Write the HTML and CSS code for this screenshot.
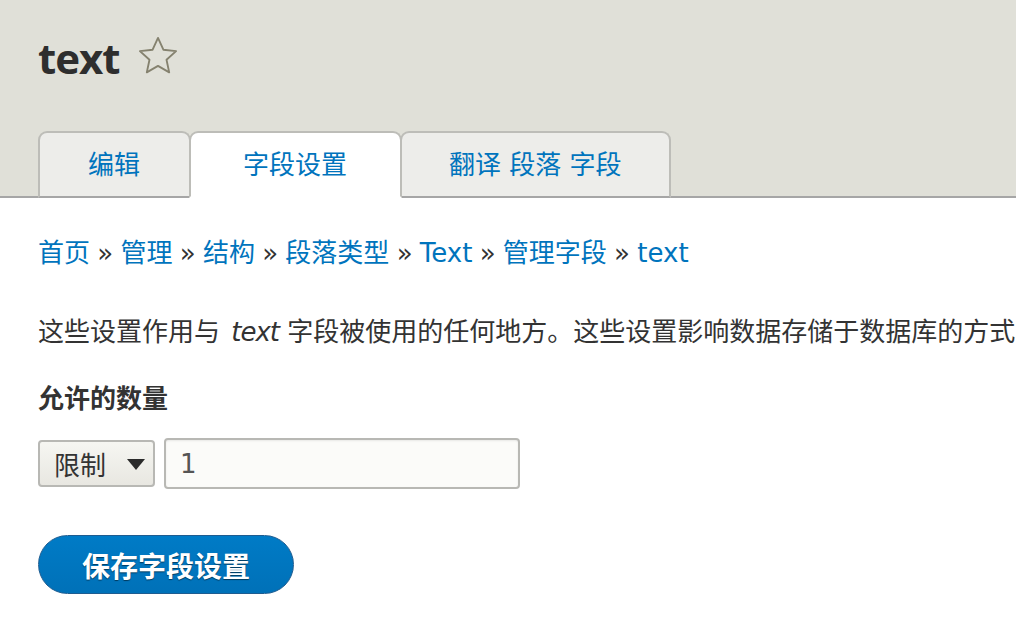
FILE: index.html
```html
<!DOCTYPE html>
<html lang="zh">
<head>
<meta charset="utf-8">
<title>text</title>
<link rel="stylesheet" href="styles.css">
</head>
<body>
<header class="header">
  <h1 class="page-title">text <span class="star"><svg viewBox="0 0 36 36" width="42" height="42"><polygon points="18,2.5 22.6,12.6 33.5,13.8 25.3,21.2 27.6,32 18,26.5 8.4,32 10.7,21.2 2.5,13.8 13.4,12.6" fill="none" stroke="#85826f" stroke-width="1.6" stroke-linejoin="round"/></svg></span></h1>
  <ul class="tabs">
    <li class="tab"><a href="#">编辑</a></li>
    <li class="tab is-active"><a href="#">字段设置</a></li>
    <li class="tab tab-wide"><a href="#">翻译 段落 字段</a></li>
  </ul>
</header>
<main class="main">
  <nav class="breadcrumb"><a href="#">首页</a> » <a href="#">管理</a> » <a href="#">结构</a> » <a href="#">段落类型</a> » <a href="#">Text</a> » <a href="#">管理字段</a> » <a href="#">text</a></nav>
  <p class="intro">这些设置作用与 <em class="placeholder">text</em> 字段被使用的任何地方。这些设置影响数据存储于数据库的方式</p>
  <div class="field-label">允许的数量</div>
  <div class="cardinality">
    <div class="select"><span>限制</span><span class="arrow"></span></div>
    <div class="input">1</div>
  </div>
  <button class="button-primary">保存字段设置</button>
</main>
</body>
</html>
```

FILE: styles.css
```css
html, body {
  margin: 0;
  padding: 0;
}
body {
  font-family: "DejaVu Sans", "Noto Sans CJK SC", sans-serif;
  font-size: 26px;
  color: #333;
  background: #fff;
  overflow: hidden;
}
a {
  color: #0074bd;
  text-decoration: none;
}
.header {
  background: #e0e0d8;
  padding: 28px 0 0 38px;
  border-bottom: 2px solid #a6a6a6;
}
.page-title {
  margin: 0;
  font-family: "Open Sans", "Noto Sans CJK SC", sans-serif;
  font-size: 42px;
  font-weight: 700;
  letter-spacing: -1px;
  line-height: 60px;
  color: #2e2e2e;
  display: flex;
  align-items: center;
  gap: 17px;
}
.star {
  display: inline-flex;
  margin-top: -4px;
}
.tabs {
  list-style: none;
  margin: 43px 0 0 0;
  padding: 0;
  display: flex;
  align-items: flex-end;
}
.tab {
  height: 63px;
  margin-bottom: -2px;
  margin-right: -2px;
  border: 2px solid #bdbdb8;
  border-bottom: 2px solid #a6a6a6;
  border-radius: 9px 9px 0 0;
  background: #ededea;
  display: flex;
  align-items: center;
  position: relative;
}
.tab a {
  padding: 0 49px 0 48px;
  line-height: 36px;
}
.tab.is-active {
  background: #fff;
  border-bottom-color: #fff;
  z-index: 1;
}
.tab.is-active a {
  padding: 0 53px 0 52px;
}
.tab.tab-wide a {
  padding: 0 47px;
}
.main {
  padding: 37px 0 0 38px;
  overflow: hidden;
}
.breadcrumb {
  line-height: 36px;
  white-space: nowrap;
  word-spacing: -1px;
}
.breadcrumb a {
  word-spacing: 0;
}
.intro {
  margin: 43px 0 0 0;
  line-height: 36px;
  white-space: nowrap;
}
.placeholder {
  margin-left: 3px;
  letter-spacing: -1px;
}
.field-label {
  margin-top: 31px;
  line-height: 36px;
  font-weight: 700;
}
.cardinality {
  margin-top: 21px;
  display: flex;
  align-items: center;
  gap: 9px;
}
.select {
  box-sizing: border-box;
  width: 117px;
  height: 47px;
  border: 2px solid #b8b8b4;
  border-radius: 4px;
  background: linear-gradient(#f6f6f2, #e8e7e1);
  display: flex;
  align-items: center;
  justify-content: space-between;
  padding: 0 8px 0 14px;
  color: #333;
}
.arrow {
  width: 0;
  height: 0;
  border-left: 9px solid transparent;
  border-right: 9px solid transparent;
  border-top: 11px solid #2b2b2b;
  margin-top: 2px;
}
.input {
  box-sizing: border-box;
  width: 356px;
  height: 51px;
  border: 2px solid #b8b8b4;
  border-radius: 4px;
  background: #fbfbf9;
  display: flex;
  align-items: center;
  padding-left: 14px;
  color: #555;
  box-shadow: inset 0 1px 2px rgba(0,0,0,0.08);
}
.button-primary {
  margin-top: 46px;
  width: 256px;
  height: 59px;
  border: 1px solid #1e5c90;
  border-radius: 30px;
  background: linear-gradient(#007bc6, #0071b8);
  color: #fff;
  font-family: "DejaVu Sans", "Noto Sans CJK SC", sans-serif;
  font-size: 28px;
  font-weight: 700;
  text-shadow: 0 1px 1px rgba(0,0,0,0.5);
  padding: 0;
  cursor: pointer;
}
```
